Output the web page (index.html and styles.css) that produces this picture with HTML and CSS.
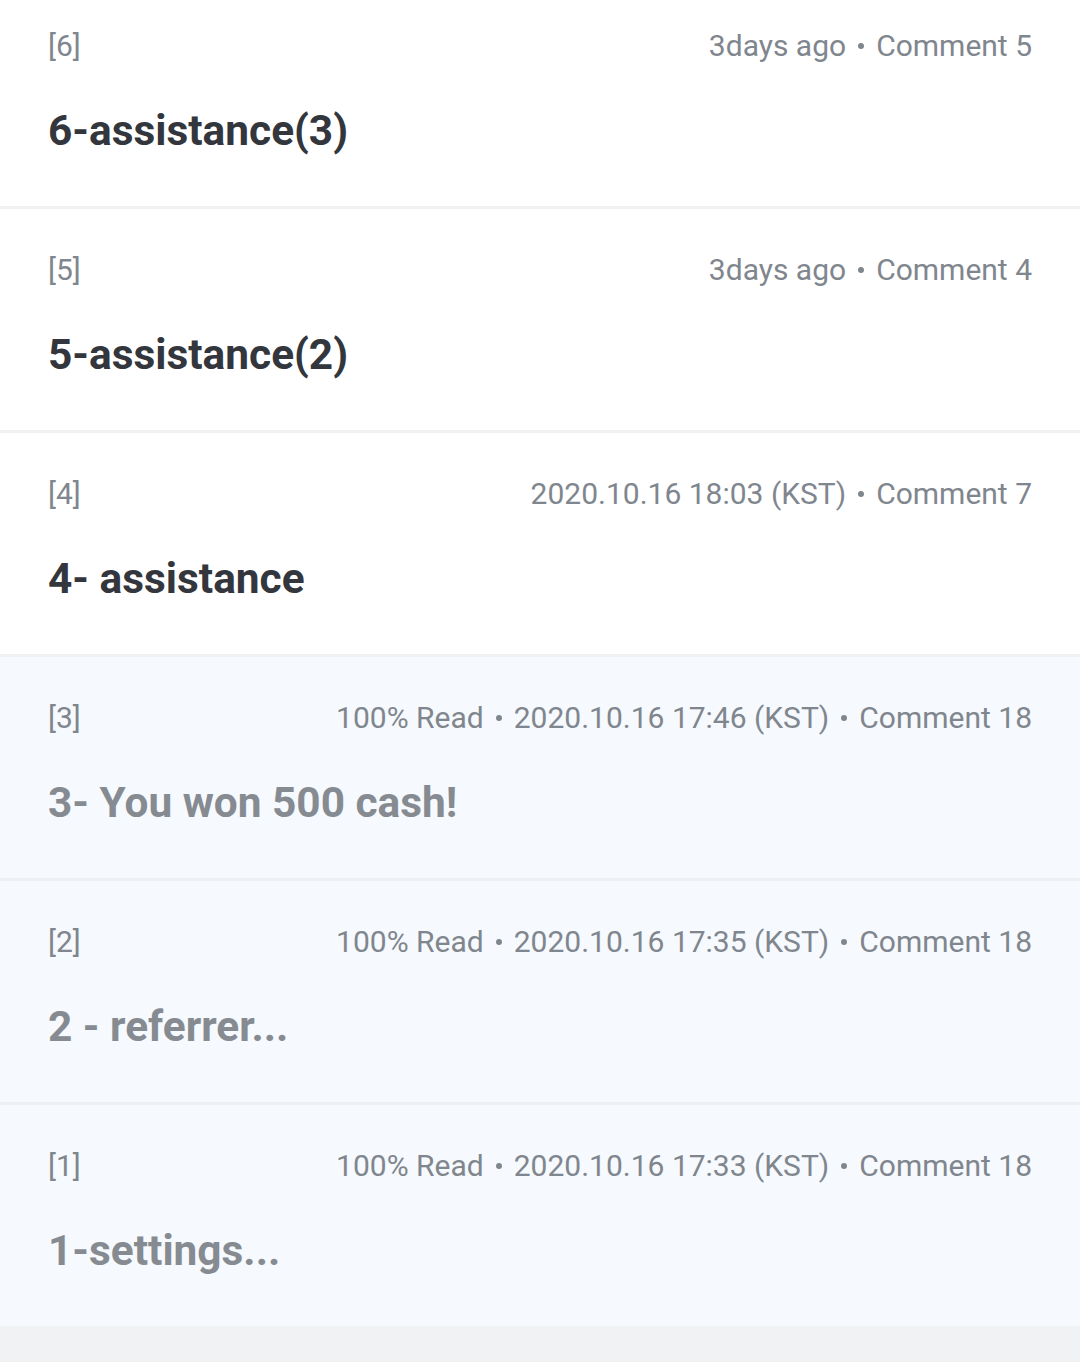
FILE: index.html
```html
<!DOCTYPE html>
<html>
<head>
<meta charset="utf-8">
<link rel="stylesheet" href="styles.css">
</head>
<body>
<div class="list">
  <div class="row">
    <div class="meta"><span class="num">[6]</span><span class="info">3days ago<i class="dot"></i>Comment 5</span></div>
    <div class="title">6-assistance(3)</div>
  </div>
  <div class="row">
    <div class="meta"><span class="num">[5]</span><span class="info">3days ago<i class="dot"></i>Comment 4</span></div>
    <div class="title">5-assistance(2)</div>
  </div>
  <div class="row">
    <div class="meta"><span class="num">[4]</span><span class="info">2020.10.16 18:03 (KST)<i class="dot"></i>Comment 7</span></div>
    <div class="title">4- assistance</div>
  </div>
  <div class="row read">
    <div class="meta"><span class="num">[3]</span><span class="info">100% Read<i class="dot"></i>2020.10.16 17:46 (KST)<i class="dot"></i>Comment 18</span></div>
    <div class="title">3- You won 500 cash!</div>
  </div>
  <div class="row read">
    <div class="meta"><span class="num">[2]</span><span class="info">100% Read<i class="dot"></i>2020.10.16 17:35 (KST)<i class="dot"></i>Comment 18</span></div>
    <div class="title">2 - referrer...</div>
  </div>
  <div class="row read">
    <div class="meta"><span class="num">[1]</span><span class="info">100% Read<i class="dot"></i>2020.10.16 17:33 (KST)<i class="dot"></i>Comment 18</span></div>
    <div class="title">1-settings...</div>
  </div>
</div>
</body>
</html>
```
FILE: styles.css
```css
html, body {
  margin: 0;
  padding: 0;
  background: #f1f2f4;
  font-family: Roboto, "Noto Sans", sans-serif;
}
.list {
  margin-top: -15px;
}
.row {
  box-sizing: border-box;
  height: 224px;
  padding: 40px 48px 0 48px;
  background: #ffffff;
  border-bottom: 3px solid #f0f1f3;
}
.row.read {
  background: #f6f9fd;
  border-bottom-color: #eef0f3;
}
.row:last-child {
  border-bottom: none;
  height: 221px;
}
.meta {
  display: flex;
  justify-content: space-between;
  align-items: center;
  height: 40px;
  font-size: 30px;
  color: #80868e;
}
.dot {
  display: inline-block;
  width: 6px;
  height: 6px;
  border-radius: 50%;
  background: #80868e;
  margin: 0 12px;
  vertical-align: middle;
  position: relative;
  top: -2px;
}
.title {
  margin-top: 41px;
  height: 50px;
  line-height: 50px;
  font-size: 42.4px;
  font-weight: 700;
  color: #33373d;
}
.read .title {
  color: #868b92;
}
```
